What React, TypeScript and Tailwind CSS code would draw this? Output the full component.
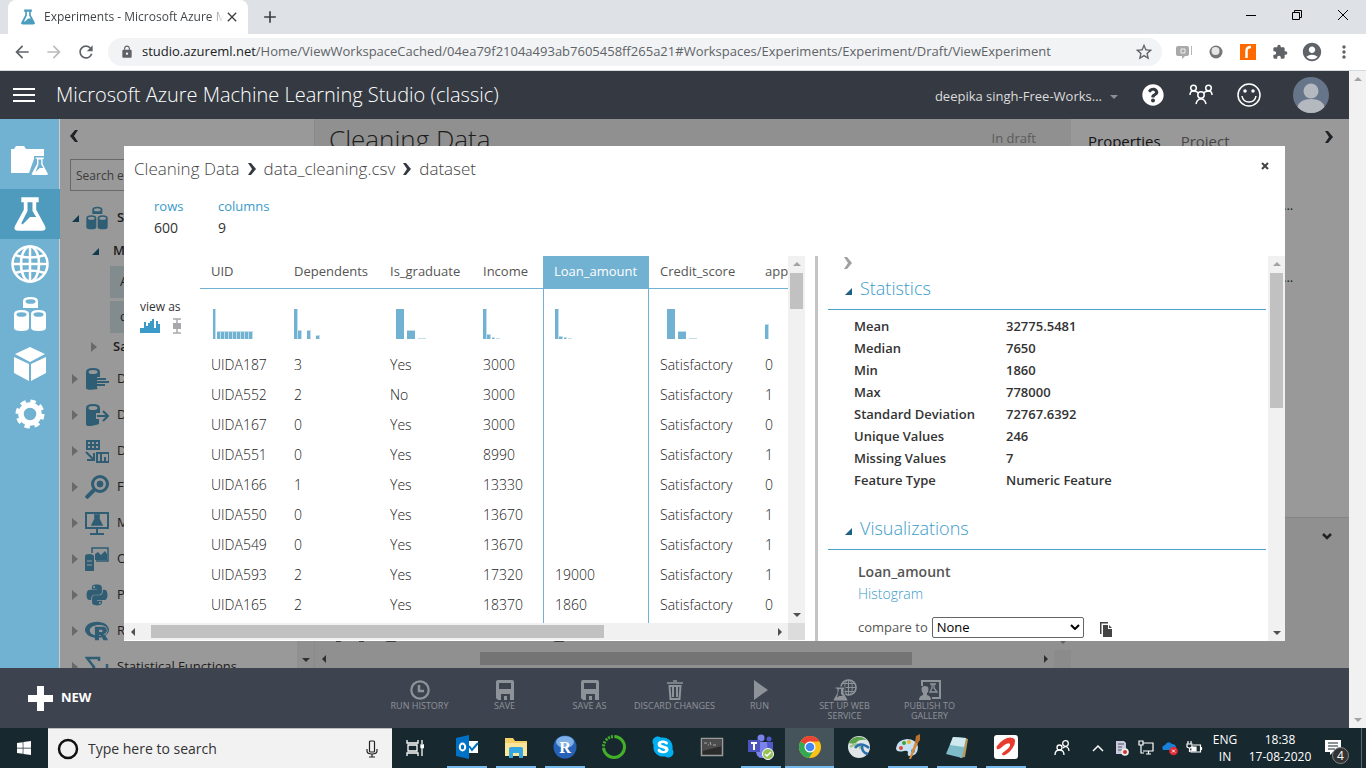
import type { ReactNode } from "react";
import clsx from "clsx";
import {
    MdAccountCircle,
    MdAdd,
    MdArrowBack,
    MdArrowForward,
    MdClose,
    MdExtension,
    MdLock,
    MdMoreVert,
    MdRefresh,
    MdStarBorder,
} from "react-icons/md";
import { FaPython, FaQuestionCircle, FaRProject, FaSkype, FaWindows } from "react-icons/fa";

type Bar = [x: number, width: number, height: number];

interface Column {
    name: string;
    bars: Bar[];
    selected?: boolean;
}

const columns: Column[] = [
    {
        name: "UID",
        bars: [[2, 3, 30], ...Array.from({ length: 9 }, (_, i): Bar => [6 + i * 4, 4, 8])],
    },
    { name: "Dependents", bars: [[0, 4, 30], [4, 4, 9], [13, 4, 9], [22, 4, 4]] },
    { name: "Is_graduate", bars: [[6, 8, 30], [17, 8, 9], [28, 8, 1]] },
    { name: "Income", bars: [[0, 4, 30], [4, 4, 5], [9, 3, 2], [13, 4, 1]] },
    { name: "Loan_amount", bars: [[0, 4, 30], [4, 4, 3], [9, 3, 2], [13, 4, 1]], selected: true },
    { name: "Credit_score", bars: [[7, 8, 30], [18, 8, 8], [29, 8, 1]] },
    { name: "approval_status", bars: [[0, 4, 15]] },
];

const rows = [
    ["UIDA187", "3", "Yes", "3000", "", "Satisfactory", "0"],
    ["UIDA552", "2", "No", "3000", "", "Satisfactory", "1"],
    ["UIDA167", "0", "Yes", "3000", "", "Satisfactory", "0"],
    ["UIDA551", "0", "Yes", "8990", "", "Satisfactory", "1"],
    ["UIDA166", "1", "Yes", "13330", "", "Satisfactory", "0"],
    ["UIDA550", "0", "Yes", "13670", "", "Satisfactory", "1"],
    ["UIDA549", "0", "Yes", "13670", "", "Satisfactory", "1"],
    ["UIDA593", "2", "Yes", "17320", "19000", "Satisfactory", "1"],
    ["UIDA165", "2", "Yes", "18370", "1860", "Satisfactory", "0"],
    ["", "", "", "", "", "", ""],
];

const statistics = [
    ["Mean", "32775.5481"],
    ["Median", "7650"],
    ["Min", "1860"],
    ["Max", "778000"],
    ["Standard Deviation", "72767.6392"],
    ["Unique Values", "246"],
    ["Missing Values", "7"],
    ["Feature Type", "Numeric Feature"],
];

/* ---------- shared drawings ---------- */

const FLASK = "M7 1h14v4h-2v6l7 13q2 4-3 4H5q-5 0-3-4l7-13V5H7z";

function Flask({ className, shade = "#4f9bbd" }: { className?: string; shade?: string }) {
    return (
        <svg viewBox="0 0 28 29" className={className} aria-hidden="true">
            <path d={FLASK} fill="currentColor" />
            <path d="M12 5h4v7l3 5h-5l-6 6-1-1 5-10z" fill={shade} />
        </svg>
    );
}

function Chevron({ className }: { className?: string }) {
    return (
        <svg viewBox="0 0 8 12" className={clsx("h-3 w-2", className)} aria-hidden="true">
            <path d="M0 0h3l5 6-5 6H0l4-6z" fill="currentColor" />
        </svg>
    );
}

function Opened({ className }: { className?: string }) {
    return (
        <svg viewBox="0 0 8 8" className={clsx("h-2 w-2", className)} aria-hidden="true">
            <path d="M8 1v7H1z" fill="currentColor" />
        </svg>
    );
}

function Closed() {
    return (
        <svg viewBox="0 0 6 10" className="h-[10px] w-[6px] text-[#b0b0b0]" aria-hidden="true">
            <path d="M0 0l6 5-6 5z" fill="currentColor" />
        </svg>
    );
}

const arrowPaths = {
    up: "M1 6l4-4 4 4z",
    down: "M1 3l4 4 4-4z",
    left: "M7 1L3 5l4 4z",
    right: "M3 1l4 4-4 4z",
};

function Arrow({ to, className }: { to: keyof typeof arrowPaths; className?: string }) {
    return (
        <svg viewBox="0 0 10 10" className={clsx("h-[10px] w-[10px]", className)} aria-hidden="true">
            <path d={arrowPaths[to]} fill="currentColor" />
        </svg>
    );
}

interface ScrollProps {
    className?: string;
    thumb?: string;
    start?: string;
    end?: string;
}

function VScroll({ className, thumb, start = "text-[#a3a3a3]", end = "text-[#505050]" }: ScrollProps) {
    return (
        <div className={clsx("flex w-[17px] shrink-0 flex-col items-center bg-[#f1f1f1]", className)}>
            <span className={clsx("flex h-[17px] shrink-0 items-center", start)}>
                <Arrow to="up" />
            </span>
            <div className={clsx("w-[13px]", thumb)} />
            <span className={clsx("mt-auto flex h-[17px] shrink-0 items-center", end)}>
                <Arrow to="down" />
            </span>
        </div>
    );
}

function HScroll({ className, thumb }: ScrollProps) {
    return (
        <div className={clsx("flex h-[17px] items-center bg-[#f1f1f1] text-[#505050]", className)}>
            <span className="flex w-[17px] shrink-0 justify-center">
                <Arrow to="left" />
            </span>
            <div className="flex h-[13px] min-w-0 flex-1">
                <div className={clsx("h-[13px]", thumb)} />
            </div>
            <span className="flex w-[17px] shrink-0 justify-center">
                <Arrow to="right" />
            </span>
        </div>
    );
}

/* ---------- browser ---------- */

function Browser() {
    return (
        <div className="shrink-0 bg-[#dee1e6] text-[#3c4043]">
            <div className="flex h-[34px] items-stretch pl-2">
                <div className="flex w-60 items-center rounded-t-lg bg-white pr-2 pl-3">
                    <Flask className="h-4 w-4 text-[#4b9dc0]" shade="#fff" />
                    <span className="ml-2 flex-1 overflow-hidden bg-gradient-to-r from-[#3c4043] from-92% to-transparent bg-clip-text text-[12px] leading-5 whitespace-nowrap text-transparent">
                        Experiments - Microsoft Azure M
                    </span>
                    <button aria-label="Close tab">
                        <MdClose className="h-4 w-4 text-[#3c4043]" />
                    </button>
                </div>
                <button aria-label="New tab" className="ml-3">
                    <MdAdd className="h-5 w-5" />
                </button>
                <div className="ml-auto flex items-center text-black">
                    <button aria-label="Minimize" className="flex w-[46px] justify-center pb-1">
                        <svg viewBox="0 0 12 12" className="h-3 w-3"><path d="M1 6.5h10" stroke="currentColor" /></svg>
                    </button>
                    <button aria-label="Restore" className="flex w-[46px] justify-center pb-1">
                        <svg viewBox="0 0 12 12" className="h-3 w-3" fill="none" stroke="currentColor">
                            <path d="M1.500 3.500h7v7h-7zM3.500 3.500v-2h7v7h-2" />
                        </svg>
                    </button>
                    <button aria-label="Close" className="flex w-[46px] justify-center pb-1">
                        <svg viewBox="0 0 12 12" className="h-3 w-3" stroke="currentColor"><path d="M1 1l10 10M11 1L1 11" /></svg>
                    </button>
                </div>
            </div>
            <div className="flex h-[37px] items-center border-b border-[#d5d8dc] bg-white pr-[14px] pl-3 text-[#5f6368]">
                <button aria-label="Back"><MdArrowBack className="h-5 w-5" /></button>
                <button aria-label="Forward" className="ml-3"><MdArrowForward className="h-5 w-5 text-[#babcbe]" /></button>
                <button aria-label="Reload" className="ml-3"><MdRefresh className="h-5 w-5" /></button>
                <div className="ml-3 flex h-7 flex-1 items-center rounded-full bg-[#f1f3f4] pr-2 pl-3">
                    <MdLock className="h-[14px] w-[14px]" />
                    <label htmlFor="address" className="ml-2 text-[13px] text-[#202124]">studio.azureml.net</label>
                    <input
                        id="address"
                        readOnly
                        className="min-w-0 flex-1 bg-transparent text-[13px] outline-none"
                        value="/Home/ViewWorkspaceCached/04ea79f2104a493ab7605458ff265a21#Workspaces/Experiments/Experiment/Draft/ViewExperiment"
                    />
                    <button aria-label="Bookmark"><MdStarBorder className="h-5 w-5" /></button>
                </div>
                <div className="ml-[14px] flex items-center gap-4">
                    <svg viewBox="0 0 16 16" className="h-4 w-4" aria-hidden="true">
                        <path d="M2 2h9q2 0 2 2v6q0 2-2 2H9l-3 3v-3H2q-2 0-2-2V4q0-2 2-2z" fill="#a9a9a9" />
                        <path d="M5 5h4v4H5z" fill="none" stroke="#eee" />
                        <path d="M15.500 2v9" stroke="#b5b5b5" />
                    </svg>
                    <svg viewBox="0 0 16 16" className="h-4 w-4" aria-hidden="true">
                        <circle cx="8" cy="8" r="6.500" fill="#777" />
                        <circle cx="7.500" cy="7" r="4" fill="#e6e6e6" />
                    </svg>
                    <svg viewBox="0 0 16 16" className="h-4 w-4" aria-hidden="true">
                        <path d="M0 0h16v16H0z" fill="#ff6a00" />
                        <path d="M6.500 14V7q0-4 4.500-4" fill="none" stroke="#fff" strokeWidth="2.500" />
                    </svg>
                    <MdExtension className="h-4 w-4" />
                    <MdAccountCircle className="-mx-[3px] h-[22px] w-[22px]" />
                    <MdMoreVert className="-mx-[2px] h-5 w-5" />
                </div>
            </div>
        </div>
    );
}

/* ---------- studio header ---------- */

function StudioHeader() {
    return (
        <header className="flex h-12 shrink-0 items-center bg-[#353a42] pr-5 pl-[13px] text-white">
            <button aria-label="Menu" className="flex w-[22px] flex-col gap-1">
                <span className="h-[2px] bg-white" />
                <span className="h-[2px] bg-white" />
                <span className="h-[2px] bg-white" />
            </button>
            <h1 className="ml-[21px] text-[20px] leading-6 font-light">
                Microsoft Azure Machine Learning Studio (classic)
            </h1>
            <button className="ml-auto flex items-center gap-2 pt-1 text-[13px] text-[#dcdcdc]">
                deepika singh-Free-Works...
                <svg viewBox="0 0 8 4" className="h-1 w-2"><path d="M0 0h8L4 4z" fill="#8b8f95" /></svg>
            </button>
            <button aria-label="Help" className="ml-6"><FaQuestionCircle className="h-[22px] w-[22px]" /></button>
            <button aria-label="Community" className="ml-[25px]">
                <svg viewBox="0 0 24 22" className="h-[22px] w-6" fill="none" stroke="currentColor" strokeWidth="1.500">
                    <circle cx="4.500" cy="4" r="2.800" />
                    <circle cx="19.500" cy="4" r="2.800" />
                    <circle cx="12" cy="11" r="3.200" />
                    <path d="M1 11q0-4 3.500-4 3 0 5 2M23 11q0-4-3.500-4-3 0-5 2M7 20q1-5 5-5t5 5" />
                </svg>
            </button>
            <button aria-label="Feedback" className="ml-6">
                <svg viewBox="0 0 24 24" className="h-6 w-6" fill="none" stroke="currentColor" strokeWidth="1.500">
                    <circle cx="12" cy="12" r="11" />
                    <path d="M5 13q1 6 7 6t7-6" />
                    <circle cx="8" cy="8" r="1" fill="currentColor" />
                    <circle cx="16" cy="8" r="1" fill="currentColor" />
                </svg>
            </button>
            <button aria-label="Account" className="ml-8">
                <svg viewBox="0 0 36 36" className="h-9 w-9">
                    <circle cx="18" cy="18" r="18" fill="#66758a" />
                    <circle cx="18" cy="14" r="7.500" fill="#b4b9bf" />
                    <path d="M4.500 30q2-8 13.500-8t13.500 8Q26 36 18 36T4.500 30z" fill="#b4b9bf" />
                </svg>
            </button>
        </header>
    );
}

/* ---------- sidebar ---------- */

function Cans({ className, hollow }: { className?: string; hollow: string }) {
    return (
        <svg viewBox="0 0 34 36" className={className} aria-hidden="true">
            <g fill="currentColor">
                <path d="M10 5q0-4 7.500-4T25 5v7H10z" />
                <path d="M1 18q0-4 7.500-4t7.500 4v14q0 3-7.500 3T1 32zM18 18q0-4 7.500-4t7.500 4v14q0 3-7.500 3T18 32z" />
            </g>
            <g fill={hollow}>
                <ellipse cx="17.500" cy="5.500" rx="5" ry="2.300" />
                <ellipse cx="8.500" cy="18.500" rx="5" ry="2.300" />
                <ellipse cx="25.500" cy="18.500" rx="5" ry="2.300" />
            </g>
        </svg>
    );
}

function Globe({ className }: { className?: string }) {
    return (
        <svg viewBox="0 0 38 38" className={className} fill="none" stroke="currentColor" strokeWidth="2.500" aria-hidden="true">
            <circle cx="19" cy="19" r="17.500" />
            <ellipse cx="19" cy="19" rx="9" ry="17.500" />
            <path d="M19 1v36M1 19h36M4 10q15 5 30 0M4 28q15-5 30 0" />
        </svg>
    );
}

const sidebarItems: { label: string; icon: ReactNode; selected?: boolean }[] = [
    {
        label: "Projects",
        icon: (
            <svg viewBox="0 0 40 38" className="h-[38px] w-10">
                <path d="M1 4h3l2-3h8l2 3h18v7H24v3l-5 14H1z" fill="#fff" />
                <g transform="translate(20 11) scale(.7)">
                    <path d={FLASK} fill="#fff" stroke="#71b1d1" strokeWidth="2" />
                    <path d="M12 5h4v7l3 5h-5l-6 6 4-11z" fill="#71b1d1" />
                </g>
            </svg>
        ),
    },
    { label: "Experiments", icon: <Flask className="h-9 w-9" />, selected: true },
    { label: "Web services", icon: <Globe className="h-[38px] w-[38px]" /> },
    { label: "Datasets", icon: <Cans className="h-9 w-[34px]" hollow="#71b1d1" /> },
    {
        label: "Trained models",
        icon: (
            <svg viewBox="0 0 34 36" className="h-9 w-[34px]" fill="#fff">
                <path d="M17 1l15 7-15 8L2 8zM1 11l15 7v17L1 27zM33 11l-15 7v17l15-8z" />
            </svg>
        ),
    },
    {
        label: "Settings",
        icon: (
            <svg viewBox="0 0 30 30" className="h-[30px] w-[30px]" fill="none" stroke="#fff">
                <circle cx="15" cy="15" r="9" strokeWidth="5.500" />
                <circle cx="15" cy="15" r="12.500" strokeWidth="4" strokeDasharray="5.300 4.517" />
            </svg>
        ),
    },
];

function Sidebar() {
    return (
        <nav className="flex w-[60px] shrink-0 flex-col border-r border-[#c9cdd0] bg-[#71b1d1] pt-5 text-white">
            {sidebarItems.map((item) => (
                <button
                    key={item.label}
                    aria-label={item.label}
                    className={clsx("-mr-px flex h-[50px] shrink-0 items-center justify-center", item.selected && "bg-[#4f9bbd]")}
                >
                    {item.icon}
                </button>
            ))}
        </nav>
    );
}

/* ---------- module palette ---------- */

const moduleGroups: { label: string; icon: ReactNode }[] = [
    {
        label: "Data Format Conversions",
        icon: (
            <svg viewBox="0 0 24 24" className="h-6 w-6">
                <path d="M1 5q0-4 7-4t7 4v5H12v11l1 1q-12 2-12-1z" fill="#4d9bc2" />
                <ellipse cx="8" cy="5" rx="4.500" ry="2" fill="#fff" />
                <path d="M12 12h9M12 15h12M12 18h8" stroke="#4d9bc2" strokeWidth="2" />
            </svg>
        ),
    },
    {
        label: "Data Input and Output",
        icon: (
            <svg viewBox="0 0 24 24" className="h-6 w-6">
                <path d="M1 5q0-4 7-4t7 4v5h-4v6h3v5q-13 4-13 0z" fill="#4d9bc2" />
                <ellipse cx="8" cy="5" rx="4.500" ry="2" fill="#fff" />
                <path d="M12 13h10M18 8l5 5-5 5" fill="none" stroke="#4d9bc2" strokeWidth="2.200" />
            </svg>
        ),
    },
    {
        label: "Data Transformation",
        icon: (
            <svg viewBox="0 0 24 24" className="h-6 w-6" fill="none" stroke="#4d9bc2">
                <path d="M1 2h14M1 6h14M1 10h14M2 1v9M6 1v9M10 1v9M14 1v9" strokeWidth="2" />
                <path d="M1 13l7 7M9 14v7H2" strokeWidth="2" />
                <path d="M11 14h13M12 14v9h12v-9M16 15v8M20 18v5" strokeWidth="2" />
            </svg>
        ),
    },
    {
        label: "Feature Selection",
        icon: (
            <svg viewBox="0 0 24 24" className="h-6 w-6" fill="none" stroke="#4d9bc2">
                <circle cx="15" cy="9" r="7.500" strokeWidth="3" />
                <circle cx="15" cy="9" r="3" fill="#4d9bc2" />
                <path d="M9 15l-8 8" strokeWidth="4" />
            </svg>
        ),
    },
    {
        label: "Machine Learning",
        icon: (
            <svg viewBox="0 0 24 24" className="h-6 w-6" fill="none" stroke="#4d9bc2">
                <path d="M1 2h22v15H1z" strokeWidth="2" />
                <path d="M12 17v5M5 23h14" strokeWidth="2" />
                <path d="M9 4h6M10 4v4l-3 6h10l-3-6V4" fill="#4d9bc2" strokeWidth="1.500" />
            </svg>
        ),
    },
    {
        label: "OpenCV Library Modules",
        icon: (
            <svg viewBox="0 0 24 24" className="h-6 w-6">
                <path d="M7 6V1h16v13H11" fill="none" stroke="#4d9bc2" strokeWidth="1.500" />
                <path d="M10 13V7l3-2 3 3 4-4 2 3v6zM0 9q0-2 4-2t5 2v15H0z" fill="#4d9bc2" />
                <path d="M2 14h5M2 18h5" stroke="#fff" />
            </svg>
        ),
    },
    { label: "Python Language Modules", icon: <FaPython className="h-6 w-6 text-[#4d9bc2]" /> },
    { label: "R Language Modules", icon: <FaRProject className="h-6 w-6 text-[#4d9bc2]" /> },
    {
        label: "Statistical Functions",
        icon: (
            <svg viewBox="0 0 24 24" className="h-6 w-6" fill="none" stroke="#4d9bc2" strokeWidth="2.500">
                <path d="M14 6V3H2l7 9-7 9h12v-3M17 22v-8M22 22V9" />
            </svg>
        ),
    },
];

function ModulePalette() {
    return (
        <aside className="flex w-[254px] shrink-0 bg-white text-[13px] text-[#333]">
            <div className="min-w-0 flex-1 overflow-hidden">
                <button aria-label="Collapse palette" className="ml-[10px] flex h-[34px] items-center">
                    <Chevron className="rotate-180 text-[#353a42]" />
                </button>
                <input
                    type="text"
                    aria-label="Search experiment items"
                    placeholder="Search experiment items"
                    className="mt-[6px] ml-[10px] h-8 w-[210px] border border-[#b0b0b0] px-[5px] text-[12px] placeholder:text-[#666]"
                />
                <ul className="mt-[9px] whitespace-nowrap">
                    <li className="flex h-9 items-center pl-[11px] font-semibold">
                        <Opened className="mr-[6px] text-[#1c6186]" />
                        <Cans className="h-6 w-6 text-[#4d9bc2]" hollow="#fff" />
                        <span className="ml-2">Saved Datasets</span>
                    </li>
                    <li className="flex h-[30px] items-center pl-[31px] font-semibold">
                        <Opened className="mr-[14px] text-[#1c6186]" />
                        My Datasets
                    </li>
                    <li className="ml-[50px] flex h-8 items-center bg-[#d9e9ef] pl-[10px]">Automobile</li>
                    <li className="mt-[3px] ml-[50px] flex h-8 items-center bg-[#d9e9ef] pl-[10px]">data_cleaning.csv</li>
                    <li className="flex h-7 items-center gap-[16px] pl-[31px] font-semibold">
                        <Closed />
                        Samples
                    </li>
                    {moduleGroups.map((group) => (
                        <li key={group.label} className="flex h-9 items-center pl-3">
                            <Closed />
                            <span className="mr-2 ml-[7px]">{group.icon}</span>
                            {group.label}
                        </li>
                    ))}
                </ul>
            </div>
            <VScroll className="mt-20" />
        </aside>
    );
}

/* ---------- experiment canvas and properties ---------- */

function Canvas() {
    return (
        <section className="flex min-w-0 flex-1 flex-col border-l border-[#e6e6e6] bg-[#f0f0f0]">
            <div className="flex min-h-0 flex-1">
                <div className="flex min-w-0 flex-1 flex-col">
                    <div className="flex items-start justify-between pr-[18px] pl-[14px]">
                        <h2 className="text-[26px] leading-10 font-light text-[#333]">Cleaning Data</h2>
                        <span className="pt-[10px] text-[13px] text-[#999]">In draft</span>
                    </div>
                    <svg viewBox="0 0 240 20" className="mt-auto mb-2 ml-5 h-5 w-60" fill="none" stroke="#666" strokeWidth="2">
                        <path d="M3 5v14M26 5v14M1 19h5M24 19h5" />
                        <circle cx="56" cy="12" r="8" />
                        <circle cx="224" cy="12" r="8" />
                    </svg>
                </div>
                <VScroll className="mt-10" end="text-[#a3a3a3]" />
            </div>
            <div className="flex h-[18px] shrink-0 bg-[#f1f1f1]">
                <HScroll className="flex-1" thumb="ml-[148px] w-[432px] bg-[#c1c1c1]" />
                <div className="w-[17px] bg-[#e8e8e8]" />
            </div>
        </section>
    );
}

function Properties() {
    return (
        <aside className="flex w-[278px] shrink-0 flex-col bg-white">
            <div className="flex flex-1 flex-col">
                <div className="flex items-center pt-[8px] pr-4 pl-[17px] text-[15px] leading-7 text-[#777]">
                    <span className="text-[#222]">Properties</span>
                    <span className="ml-5">Project</span>
                    <Chevron className="mb-2 ml-auto text-[#353a42]" />
                </div>
                <span className="mt-10 ml-[212px] text-[13px] leading-5 text-[#333]">...</span>
                <span className="mt-[52px] ml-[212px] text-[13px] leading-5 text-[#333]">...</span>
            </div>
            <div className="flex h-[151px] items-start justify-end border-t border-[#ddd] bg-[#f0f0f0] pt-3 pr-[17px]">
                <svg viewBox="0 0 10 12" className="h-3 w-[10px]" fill="none" stroke="#353a42" strokeWidth="2.500">
                    <path d="M1 4l4 4 4-4" />
                </svg>
            </div>
        </aside>
    );
}

/* ---------- dataset dialog ---------- */

function Histogram({ bars }: { bars: Bar[] }) {
    return (
        <svg viewBox="0 0 60 30" className="block h-[30px] w-[60px]" aria-hidden="true">
            {bars.map(([x, width, height]) => (
                <g key={x}>
                    <rect x={x} y={30 - height} width={width} height={height} fill="#c2deec" />
                    <rect
                        x={x}
                        y={Math.min(30 - height + (height < 30 ? 1 : 0), 29)}
                        width={width > 4 ? width : width - 1}
                        height={height}
                        fill={height < 2 ? "#c2deec" : "#71b1d1"}
                    />
                </g>
            ))}
        </svg>
    );
}

function DataTable() {
    return (
        <table className="w-[674px] table-fixed border-separate border-spacing-0 text-left">
            <colgroup>
                <col className="w-[83px]" />
                <col className="w-[96px]" />
                <col className="w-[93px]" />
                <col className="w-[71px]" />
                <col className="w-[106px]" />
                <col className="w-[105px]" />
                <col className="w-[120px]" />
            </colgroup>
            <thead>
                <tr>
                    {columns.map((column) => (
                        <th
                            key={column.name}
                            className={clsx(
                                "h-[33px] border-b border-[#71b1d1] pl-[11px] text-[13px] font-normal",
                                column.selected ? "bg-[#71b1d1] text-white" : "text-[#555]"
                            )}
                        >
                            {column.name}
                        </th>
                    ))}
                </tr>
                <tr>
                    {columns.map((column) => (
                        <td
                            key={column.name}
                            className={clsx("h-[61px] pt-5 pl-[11px] align-top", column.selected && "border-x border-[#71b1d1]")}
                        >
                            <Histogram bars={column.bars} />
                        </td>
                    ))}
                </tr>
            </thead>
            <tbody>
                {rows.map((row, rowIndex) => (
                    <tr key={rowIndex}>
                        {row.map((value, i) => (
                            <td
                                key={columns[i].name}
                                className={clsx(
                                    "h-[30px] pl-[11px] text-[14px] leading-5 font-light text-[#222]",
                                    columns[i].selected && "border-x border-[#71b1d1]"
                                )}
                            >
                                {value}
                            </td>
                        ))}
                    </tr>
                ))}
            </tbody>
        </table>
    );
}

function SectionTitle({ children }: { children: ReactNode }) {
    return (
        <h3 className="flex h-10 items-center border-b border-[#4ba2c8] pb-[2px] pl-4 text-[18px] font-light text-[#3a9bc9]">
            <Opened className="mt-1 mr-2 text-[#1c6186]" />
            {children}
        </h3>
    );
}

function DatasetDialog() {
    return (
        <div role="dialog" aria-label="dataset" className="flex h-full flex-col bg-white text-[#333]">
            <div className="flex items-start justify-between pt-2 pr-4 pl-[10px]">
                <div className="flex h-[30px] items-center gap-2 text-[17px] font-light text-[#444]">
                    <span>Cleaning Data</span>
                    <Chevron className="text-[#353a42]" />
                    <span>data_cleaning.csv</span>
                    <Chevron className="text-[#353a42]" />
                    <span>dataset</span>
                </div>
                <button aria-label="Close" className="pt-2">
                    <svg viewBox="0 0 8 8" className="h-2 w-2" stroke="#444" strokeWidth="2"><path d="M1 1l6 6M7 1L1 7" /></svg>
                </button>
            </div>
            <dl className="flex pt-[11px] pl-[30px] leading-[22px]">
                <div className="w-16">
                    <dt className="text-[13px] text-[#3a9bc9]">rows</dt>
                    <dd className="text-[14px]">600</dd>
                </div>
                <div className="w-16">
                    <dt className="text-[13px] text-[#3a9bc9]">columns</dt>
                    <dd className="text-[14px]">9</dd>
                </div>
            </dl>
            <div className="mt-[17px] flex min-h-0 flex-1">
                <div className="flex min-w-0 flex-1 flex-col pb-px">
                    <div className="flex min-h-0 flex-1">
                        <div className="w-[76px] shrink-0 pt-[42px] pl-4 text-[12px]">
                            view as
                            <div className="mt-[2px] flex items-center gap-3">
                                <button aria-label="Histogram view">
                                    <svg viewBox="0 0 20 14" className="h-[14px] w-5">
                                        <path d="M0 14V9h4V3h2v4h2V4h2V2h2V0h2v9h2V2h2v3h2v9z" fill="#3a9bc9" />
                                    </svg>
                                </button>
                                <button aria-label="Box plot view">
                                    <svg viewBox="0 0 10 16" className="h-4 w-[10px]">
                                        <path d="M1 1h8M1 15h8M5 1v14" stroke="#a6a8ab" strokeWidth="1.500" />
                                        <path d="M1 5h8v6H1z" fill="#a6a8ab" />
                                    </svg>
                                </button>
                            </div>
                        </div>
                        <div className="min-w-0 flex-1 overflow-hidden">
                            <DataTable />
                        </div>
                        <VScroll thumb="h-9 bg-[#c1c1c1]" />
                    </div>
                    <div className="flex shrink-0">
                        <HScroll className="flex-1" thumb="ml-[10px] w-[453px] bg-[#c1c1c1]" />
                        <div className="w-[17px] bg-[#dcdcdc]" />
                    </div>
                </div>
                <div className="ml-[10px] w-[3px] bg-[#c4c4c4]" />
                <div className="flex w-[467px] shrink-0 pl-[10px]">
                    <div className="min-w-0 flex-1 pr-[2px]">
                        <button aria-label="Collapse details" className="ml-4 flex h-[14px] items-center">
                            <Chevron className="text-[#a0a0a0]" />
                        </button>
                        <SectionTitle>Statistics</SectionTitle>
                        <table className="mt-[6px] ml-[26px] text-left text-[13px] font-semibold">
                            <tbody>
                                {statistics.map(([name, value]) => (
                                    <tr key={name} className="h-[22px]">
                                        <th scope="row" className="w-[152px] p-0 font-semibold">{name}</th>
                                        <td className="p-0">{value}</td>
                                    </tr>
                                ))}
                            </tbody>
                        </table>
                        <div className="h-[18px]" />
                        <SectionTitle>Visualizations</SectionTitle>
                        <div className="mt-[11px] ml-[30px] text-[14px] leading-[22px]">
                            <p className="font-semibold text-[#555]">Loan_amount</p>
                            <p className="font-light text-[#3a9bc9]">Histogram</p>
                            <div className="mt-[11px] flex items-center text-[13px] text-[#555]">
                                <label htmlFor="compare">compare to</label>
                                <div className="relative ml-1">
                                    <select
                                        id="compare"
                                        className="block h-[21px] w-[152px] appearance-none rounded-xs border border-[#666] bg-white pl-1 text-[13px] leading-4 text-black"
                                    >
                                        <option>None</option>
                                    </select>
                                    <svg viewBox="0 0 10 6" className="pointer-events-none absolute top-[7px] right-1 h-[6px] w-[10px]" fill="none" stroke="#000" strokeWidth="2">
                                        <path d="M1 1l4 4 4-4" />
                                    </svg>
                                </div>
                                <button aria-label="Copy" className="ml-4 pt-1">
                                    <svg viewBox="0 0 12 15" className="h-[15px] w-3" fill="#444">
                                        <path d="M0 0h8v1.500H1.500V12H0zM3 3h5v4h4v8H3zM9 3l3 3H9z" />
                                    </svg>
                                </button>
                            </div>
                        </div>
                    </div>
                    <VScroll thumb="h-[135px] bg-[#c1c1c1]" />
                </div>
            </div>
        </div>
    );
}

/* ---------- command bar ---------- */

function Floppy() {
    return (
        <svg viewBox="0 0 20 20" className="h-5 w-5" aria-hidden="true">
            <path d="M3 0h14q2 0 2 2v18h-4v-6H6v6H3l-2-2V2q0-2 2-2zm1 3v6h12V3z" fill="currentColor" fillRule="evenodd" />
            <path d="M9 16h3v4H9z" fill="currentColor" />
        </svg>
    );
}

const commands: { label: string; icon: ReactNode }[] = [
    {
        label: "RUN HISTORY",
        icon: (
            <svg viewBox="0 0 20 20" className="h-5 w-5" fill="none" stroke="currentColor">
                <circle cx="10" cy="10" r="8.700" strokeWidth="2.200" />
                <path d="M9 5v6h5" strokeWidth="2.500" />
            </svg>
        ),
    },
    { label: "SAVE", icon: <Floppy /> },
    { label: "SAVE AS", icon: <Floppy /> },
    {
        label: "DISCARD CHANGES",
        icon: (
            <svg viewBox="0 0 20 20" className="h-5 w-5" fill="none" stroke="currentColor">
                <path d="M2 3h16M8 1h4" strokeWidth="1.500" />
                <path d="M4.500 6h11l-1 13h-9zM8 7v10M12 7v10" strokeWidth="2" />
            </svg>
        ),
    },
    {
        label: "RUN",
        icon: (
            <svg viewBox="0 0 20 20" className="h-5 w-5" fill="currentColor">
                <path d="M4 0l14 10L4 20z" />
            </svg>
        ),
    },
    {
        label: "SET UP WEB\nSERVICE",
        icon: (
            <svg viewBox="0 0 24 22" className="h-[22px] w-6" fill="none" stroke="currentColor">
                <circle cx="15.500" cy="8.500" r="7.500" strokeWidth="1.700" />
                <path d="M15.500 1v15M8 8.500h15M10 4.500h11M10 12.500h11" strokeWidth="1.200" />
                <ellipse cx="15.500" cy="8.500" rx="3.800" ry="7.500" />
                <path d="M2 8h10v2h-1v4l4 7q0 1-1 1H1q-1 0-1-1l4-7v-4H2z" fill="currentColor" stroke="#3e444f" />
                <path d="M6 10h2v5l2 2H6l-2 2z" fill="#3e444f" stroke="none" />
            </svg>
        ),
    },
    {
        label: "PUBLISH TO\nGALLERY",
        icon: (
            <svg viewBox="0 0 22 20" className="h-5 w-[22px]" fill="none" stroke="currentColor">
                <path d="M3 6V1h18v17h-8" strokeWidth="2" />
                <path d="M11 4h6M13 4v4l-2 4h7l-3-4V4" strokeWidth="1.300" />
                <path d="M2.500 9q0-3 3.500-3t3.500 3q0 3-1.500 4v2q4 1 4 5H0q0-4 4-5v-2Q2.500 12 2.500 9z" fill="currentColor" stroke="none" />
            </svg>
        ),
    },
];

function CommandBar() {
    return (
        <div className="flex h-[60px] shrink-0 bg-[#3e444f]">
            <button className="flex w-[377px] items-center gap-2 pl-7 text-[13px] font-bold text-white">
                <svg viewBox="0 0 25 25" className="h-[25px] w-[25px]"><path d="M9 0h7v9h9v7h-9v9H9v-9H0V9h9z" fill="#fff" /></svg>
                NEW
            </button>
            {commands.map((command) => (
                <button key={command.label} className="flex w-[85px] flex-col items-center pt-[10px] text-[#8e9299]">
                    <span className="flex h-[23px] items-center">{command.icon}</span>
                    <span className="text-center text-[9px] leading-[10px] whitespace-pre">{command.label}</span>
                </button>
            ))}
        </div>
    );
}

/* ---------- taskbar ---------- */

const taskbarApps: { label: string; icon: ReactNode; open?: boolean; active?: boolean }[] = [
    {
        label: "Outlook",
        open: true,
        icon: (
            <svg viewBox="0 0 24 24" className="h-6 w-6">
                <path d="M12 6h11v12H12z" fill="#fff" />
                <path d="M14 11l3 4 6-7" fill="none" stroke="#0072c6" strokeWidth="2" />
                <path d="M1 3l13-3v24L1 21z" fill="#0072c6" />
                <ellipse cx="7.500" cy="12" rx="2.700" ry="3.500" fill="none" stroke="#fff" strokeWidth="2" />
            </svg>
        ),
    },
    {
        label: "File Explorer",
        open: true,
        icon: (
            <svg viewBox="0 0 24 24" className="h-6 w-6">
                <path d="M1 3h8l2 3h12v15H1z" fill="#f6d067" />
                <path d="M1 8h22v13H1z" fill="#fde59a" />
                <path d="M5 14q0-2 2-2h10q2 0 2 2v9h-4v-5H9v5H5z" fill="#34a6e0" />
            </svg>
        ),
    },
    {
        label: "RStudio",
        open: true,
        icon: (
            <svg viewBox="0 0 24 24" className="h-6 w-6">
                <circle cx="12" cy="12" r="11.500" fill="#2663b8" />
                <ellipse cx="12" cy="7" rx="9" ry="6" fill="#7fb0e6" />
                <text x="12" y="18" textAnchor="middle" fontSize="16" fontFamily="Liberation Serif, serif" fontWeight="700" fill="#fff">R</text>
            </svg>
        ),
    },
    {
        label: "Anaconda",
        icon: (
            <svg viewBox="0 0 26 26" className="h-[26px] w-[26px]" fill="none" stroke="#43b02a">
                <circle cx="13" cy="13" r="10.500" strokeWidth="3" strokeDasharray="44 1.500 2 1 2 1.500 2 1 2 1 2 1.500" strokeDashoffset="12" />
            </svg>
        ),
    },
    {
        label: "Skype",
        icon: (
            <span className="relative flex">
                <svg viewBox="0 0 24 24" className="h-6 w-6"><circle cx="12" cy="12" r="9" fill="#fff" /></svg>
                <FaSkype className="absolute inset-0 h-6 w-6 text-[#00aff0]" />
            </span>
        ),
    },
    {
        label: "Command Prompt",
        icon: (
            <svg viewBox="0 0 24 24" className="h-6 w-6">
                <path d="M1.500 3.500h21v17h-21z" fill="#2b2b2b" stroke="#9c9c9c" strokeWidth="1.500" />
                <path d="M2 4h20v7L2 16z" fill="#4c4c4c" />
                <path d="M4 8h3M8 10h1M10 7l1 3M13 10h3" stroke="#aaa" />
            </svg>
        ),
    },
    {
        label: "Teams",
        open: true,
        icon: (
            <svg viewBox="0 0 26 26" className="h-[26px] w-[26px]">
                <circle cx="13" cy="4" r="3.500" fill="#7b83eb" />
                <circle cx="21" cy="5" r="2.500" fill="#5059c9" />
                <path d="M8 8h12v10q-1 6-6 6t-6-6z" fill="#7b83eb" />
                <path d="M19 8h6v8q-1 4-5 4z" fill="#5059c9" />
                <path d="M0 6h12v12H0z" fill="#4b53bc" />
                <path d="M3 9h6M6 9v7" stroke="#fff" strokeWidth="2" />
                <circle cx="20" cy="20" r="5.500" fill="#92c353" stroke="#fff" />
                <path d="M17 20l2 2 4-4" fill="none" stroke="#fff" strokeWidth="1.500" />
            </svg>
        ),
    },
    {
        label: "Chrome",
        open: true,
        active: true,
        icon: (
            <svg viewBox="0 0 24 24" className="h-6 w-6">
                <circle cx="12" cy="12" r="11" fill="#fbc116" />
                <path d="M12 12L2.500 6.500A11 11 0 0 1 21.500 6.500H12z" fill="#ea4335" />
                <path d="M2.500 6.500A11 11 0 0 0 11 23l5.500-8.500L12 12z" fill="#34a853" />
                <circle cx="12" cy="12" r="5.500" fill="#fff" />
                <circle cx="12" cy="12" r="4.300" fill="#4285f4" />
            </svg>
        ),
    },
    {
        label: "Webex",
        icon: (
            <svg viewBox="0 0 24 24" className="h-6 w-6" fill="none">
                <circle cx="12" cy="12" r="11" fill="#dfe5e8" />
                <path d="M1.500 8Q9-3 20 5q-8-1-10 2t-8.500 1z" fill="#5ba24a" />
                <path d="M3 12q8-6 11 2" stroke="#9fc58c" strokeWidth="2.500" />
                <path d="M8 13q5-7 14 0M15 11q0 7 6 8" stroke="#2a6fae" strokeWidth="2.500" />
            </svg>
        ),
    },
    {
        label: "Paint",
        open: true,
        icon: (
            <svg viewBox="0 0 26 26" className="h-[26px] w-[26px]">
                <path d="M12 5q9 0 11 8 0 9-9 9-2-1-1-4-1-2-4-1-8 2-8-3Q2 6 12 5z" fill="#c5e1f2" />
                <circle cx="6" cy="14" r="2" fill="#e04a3a" />
                <circle cx="9" cy="9" r="2" fill="#3fa33f" />
                <circle cx="14" cy="8" r="2" fill="#f0b429" />
                <circle cx="18" cy="17" r="2" fill="#3b82d0" />
                <path d="M14 25l6-17 3 1-7 16z" fill="#d98b3a" />
                <path d="M20 8l1-6 4-2v6l-2 3z" fill="#b9712d" />
            </svg>
        ),
    },
    {
        label: "Notepad",
        open: true,
        icon: (
            <svg viewBox="0 0 24 24" className="h-6 w-6">
                <path d="M20 3l3 1-3 18-5 1z" fill="#b89a5a" />
                <path d="M8 2l13 1-4 20L1 19z" fill="#7fbcc9" />
                <path d="M8 2l13 1-2 9-14-2z" fill="#cfe9ee" />
            </svg>
        ),
    },
    {
        label: "Airtel",
        open: true,
        icon: (
            <svg viewBox="0 0 24 24" className="h-6 w-6">
                <rect width="24" height="24" rx="3" fill="#fff" />
                <path
                    d="M3 11Q9 3 16 2.500q7 0 4.500 7Q17 17 11 20q-3 1-3-1 0-1 3-3 6-4 5-7-2-2-7 2-4 4-6 3-1-1 0-3z"
                    fill="#e93a2e"
                />
            </svg>
        ),
    },
];

function Taskbar() {
    return (
        <footer className="flex h-10 shrink-0 bg-[#17282f] text-white">
            <button aria-label="Start" className="flex w-12 items-center justify-center"><FaWindows className="h-4 w-4" /></button>
            <div className="flex w-[344px] items-center border-t border-[#bdbdbd] bg-[#f2f2f2] pr-[13px] pl-[9px] text-[#333]">
                <svg viewBox="0 0 22 22" className="h-[22px] w-[22px]" aria-hidden="true"><circle cx="11" cy="11" r="9" fill="none" stroke="#111" strokeWidth="2.500" /></svg>
                <input
                    type="text"
                    aria-label="Search Windows"
                    placeholder="Type here to search"
                    className="ml-[9px] min-w-0 flex-1 bg-transparent text-[14px] placeholder:text-[#333]"
                />
                <svg viewBox="0 0 14 18" className="h-[18px] w-[14px]" fill="none" stroke="#222" strokeWidth="1.200">
                    <rect x="4.500" y="1" width="5" height="11" rx="1" />
                    <path d="M2 9v2q0 3 5 3t5-3V9M7 14v3M4 17h6" />
                </svg>
            </div>
            <button aria-label="Task View" className="flex w-[50px] items-center justify-center pr-1">
                <svg viewBox="0 0 18 16" className="h-4 w-[18px]" fill="none" stroke="currentColor" strokeWidth="1.300">
                    <path d="M1 0v3h11V0M2 5h9v6H2zM1 16v-3h11v3M16 0v4M16 8v8" />
                    <path d="M15 5h2.500v2.500H15z" fill="currentColor" />
                </svg>
            </button>
            <div className="flex">
                {taskbarApps.map((app) => (
                    <button
                        key={app.label}
                        aria-label={app.label}
                        className={clsx("flex w-[49px] flex-col items-center", app.active && "bg-[#45535a]")}
                    >
                        <span className="flex h-[38px] items-center">{app.icon}</span>
                        <span className={clsx("h-[2px]", app.active ? "w-full" : "w-10", app.open && "bg-[#76b9ed]")} />
                    </button>
                ))}
            </div>
            <div className="ml-auto flex items-center text-[12px]">
                <svg viewBox="0 0 16 16" className="h-4 w-4" fill="none" stroke="currentColor" strokeWidth="1.300">
                    <circle cx="5.500" cy="7.500" r="2.500" />
                    <circle cx="11.500" cy="3.500" r="2.800" />
                    <path d="M1 15q0-5 4.500-5T10 15M9 8q2-2 4-1 2 1 2 4" />
                </svg>
                <svg viewBox="0 0 12 8" className="ml-[22px] h-2 w-3" fill="none" stroke="currentColor" strokeWidth="1.500"><path d="M1 7l5-5 5 5" /></svg>
                <svg viewBox="0 0 16 16" className="ml-[10px] h-4 w-4">
                    <path d="M2 1h8l2 2v11H2z" fill="#c9cbe0" />
                    <path d="M4 4h6M4 7h4M4 10h4" stroke="#555" />
                    <circle cx="11" cy="12" r="3.800" fill="#eee" />
                    <circle cx="11" cy="12" r="2" fill="#d0342c" />
                </svg>
                <svg viewBox="0 0 16 16" className="ml-2 h-4 w-4" fill="none" stroke="currentColor" strokeWidth="1.200">
                    <path d="M5 3h10v8H5M8 14h5M10.500 11v3M1 1h4v4H1zM3 5v8h3" />
                </svg>
                <svg viewBox="0 0 16 16" className="ml-2 h-4 w-4">
                    <path d="M1 10q-2-4 2-5 3-5 7-1 4 0 4 4v2z" fill="#1683d8" />
                    <circle cx="11.500" cy="11" r="4.300" fill="#e02b35" />
                    <path d="M10 9.500l3 3M13 9.500l-3 3" stroke="#fff" />
                </svg>
                <svg viewBox="0 0 17 14" className="ml-2 h-[14px] w-[17px]" fill="none" stroke="currentColor" strokeWidth="1.200">
                    <path d="M7 4h7.500v7H5V9M15.500 6v3M1 3h5v3q-2 2-5 0zM2 3V0M5 3V0M3.500 7v4" />
                    <path d="M6 6h4v4H6z" fill="currentColor" />
                </svg>
                <div className="ml-2 w-[28px] text-center leading-[17px]">ENG<br />IN</div>
                <div className="ml-2 w-[66px] text-center leading-[17px]">18:38<br />17-08-2020</div>
                <span className="relative mr-2 ml-3 flex h-full w-7 items-center">
                    <svg viewBox="0 0 16 16" className="h-4 w-4"><path d="M0 0h16v12H8l-3 3v-3H0z" fill="#fff" /><path d="M3 3h10M3 6h10M3 9h7" stroke="#17282f" /></svg>
                    <span className="absolute right-1 bottom-1 flex h-[17px] w-[17px] items-center justify-center rounded-full border border-[#888] bg-[#333] text-[12px] leading-none">4</span>
                </span>
                <span className="mr-1 h-full w-px bg-[#5d696e]" />
            </div>
        </footer>
    );
}

export default function App() {
    return (
        <div className="flex h-screen flex-col overflow-hidden font-['Open_Sans','Noto_Sans',sans-serif]">
            <Browser />
            <div className="flex min-h-0 flex-1">
                <div className="flex min-w-0 flex-1 flex-col">
                    <StudioHeader />
                    <div className="flex min-h-0 flex-1">
                        <Sidebar />
                        <main className="relative flex min-w-0 flex-1 overflow-hidden">
                            <ModulePalette />
                            <Canvas />
                            <Properties />
                            <div className="absolute inset-0 bg-black/40 px-16 py-[27px]">
                                <DatasetDialog />
                            </div>
                        </main>
                    </div>
                    <CommandBar />
                </div>
                <VScroll end="text-[#a3a3a3]" />
            </div>
            <Taskbar />
        </div>
    );
}
